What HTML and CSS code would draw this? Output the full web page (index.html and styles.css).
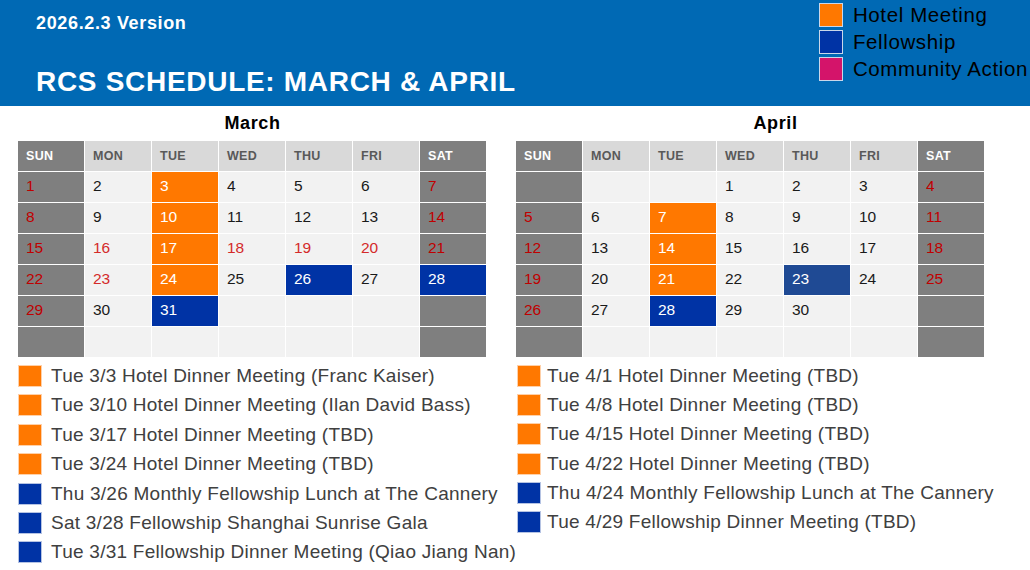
FILE: index.html
```html
<!DOCTYPE html>
<html lang="en">
<head>
<meta charset="utf-8">
<title>RCS Schedule: March &amp; April</title>
<link rel="stylesheet" href="styles.css">
</head>
<body>
<header class="header">
  <div class="header-left">
    <div class="version">2026.2.3 Version</div>
    <h1 class="title">RCS SCHEDULE: MARCH &amp; APRIL</h1>
  </div>
  <ul class="legend">
    <li class="legend-item"><span class="swatch swatch-hotel"></span>Hotel Meeting</li>
    <li class="legend-item"><span class="swatch swatch-fellow"></span>Fellowship</li>
    <li class="legend-item"><span class="swatch swatch-community"></span>Community Action</li>
  </ul>
</header>

<main class="main">
  <section class="month">
    <h2 class="month-title">March</h2>
    <div class="cal">
      <div class="hd wkend">SUN</div><div class="hd">MON</div><div class="hd">TUE</div><div class="hd">WED</div><div class="hd">THU</div><div class="hd">FRI</div><div class="hd wkend">SAT</div>

      <div class="c wkend">1</div><div class="c">2</div><div class="c hotel">3</div><div class="c">4</div><div class="c">5</div><div class="c">6</div><div class="c wkend">7</div>
      <div class="c wkend">8</div><div class="c">9</div><div class="c hotel">10</div><div class="c">11</div><div class="c">12</div><div class="c">13</div><div class="c wkend">14</div>
      <div class="c wkend">15</div><div class="c red">16</div><div class="c hotel">17</div><div class="c red">18</div><div class="c red">19</div><div class="c red">20</div><div class="c wkend">21</div>
      <div class="c wkend">22</div><div class="c red">23</div><div class="c hotel">24</div><div class="c">25</div><div class="c fellow">26</div><div class="c">27</div><div class="c fellow">28</div>
      <div class="c wkend">29</div><div class="c">30</div><div class="c fellow">31</div><div class="c"></div><div class="c"></div><div class="c"></div><div class="c wkend"></div>
      <div class="c wkend"></div><div class="c"></div><div class="c"></div><div class="c"></div><div class="c"></div><div class="c"></div><div class="c wkend"></div>
    </div>
    <ul class="events">
      <li class="event"><span class="sq sq-hotel"></span>Tue 3/3 Hotel Dinner Meeting (Franc Kaiser)</li>
      <li class="event"><span class="sq sq-hotel"></span>Tue 3/10 Hotel Dinner Meeting (Ilan David Bass)</li>
      <li class="event"><span class="sq sq-hotel"></span>Tue 3/17 Hotel Dinner Meeting (TBD)</li>
      <li class="event"><span class="sq sq-hotel"></span>Tue 3/24 Hotel Dinner Meeting (TBD)</li>
      <li class="event"><span class="sq sq-fellow"></span>Thu 3/26 Monthly Fellowship Lunch at The Cannery</li>
      <li class="event"><span class="sq sq-fellow"></span>Sat 3/28 Fellowship Shanghai Sunrise Gala</li>
      <li class="event"><span class="sq sq-fellow"></span>Tue 3/31 Fellowship Dinner Meeting (Qiao Jiang Nan)</li>
    </ul>
  </section>

  <section class="month month-april">
    <h2 class="month-title month-title-april">April</h2>
    <div class="cal">
      <div class="hd wkend">SUN</div><div class="hd">MON</div><div class="hd">TUE</div><div class="hd">WED</div><div class="hd">THU</div><div class="hd">FRI</div><div class="hd wkend">SAT</div>

      <div class="c wkend"></div><div class="c"></div><div class="c"></div><div class="c">1</div><div class="c">2</div><div class="c">3</div><div class="c wkend">4</div>
      <div class="c wkend">5</div><div class="c">6</div><div class="c hotel">7</div><div class="c">8</div><div class="c">9</div><div class="c">10</div><div class="c wkend">11</div>
      <div class="c wkend">12</div><div class="c">13</div><div class="c hotel">14</div><div class="c">15</div><div class="c">16</div><div class="c">17</div><div class="c wkend">18</div>
      <div class="c wkend">19</div><div class="c">20</div><div class="c hotel">21</div><div class="c">22</div><div class="c fellow-alt">23</div><div class="c">24</div><div class="c wkend">25</div>
      <div class="c wkend">26</div><div class="c">27</div><div class="c fellow">28</div><div class="c">29</div><div class="c">30</div><div class="c"></div><div class="c wkend"></div>
      <div class="c wkend"></div><div class="c"></div><div class="c"></div><div class="c"></div><div class="c"></div><div class="c"></div><div class="c wkend"></div>
    </div>
    <ul class="events events-april">
      <li class="event"><span class="sq sq-hotel"></span>Tue 4/1 Hotel Dinner Meeting (TBD)</li>
      <li class="event"><span class="sq sq-hotel"></span>Tue 4/8 Hotel Dinner Meeting (TBD)</li>
      <li class="event"><span class="sq sq-hotel"></span>Tue 4/15 Hotel Dinner Meeting (TBD)</li>
      <li class="event"><span class="sq sq-hotel"></span>Tue 4/22 Hotel Dinner Meeting (TBD)</li>
      <li class="event"><span class="sq sq-fellow"></span>Thu 4/24 Monthly Fellowship Lunch at The Cannery</li>
      <li class="event"><span class="sq sq-fellow"></span>Tue 4/29 Fellowship Dinner Meeting (TBD)</li>
    </ul>
  </section>
</main>
</body>
</html>
```

FILE: styles.css
```css
* { box-sizing: border-box; }

html, body {
  margin: 0;
  padding: 0;
  background: #ffffff;
}

body {
  width: 1030px;
  height: 570px;
  overflow: hidden;
  font-family: "Liberation Sans", Arial, sans-serif;
}

ul { list-style: none; margin: 0; padding: 0; }
h1, h2 { margin: 0; }

/* ---------- header ---------- */
.header {
  height: 106px;
  background: #0069b4;
  display: flex;
  justify-content: space-between;
  align-items: flex-start;
}

.header-left {
  padding: 12px 0 0 36px;
  color: #ffffff;
}

.version {
  font-size: 18px;
  font-weight: bold;
  line-height: 22px;
  letter-spacing: 0.65px;
}

.title {
  margin-top: 32px;
  font-size: 28px;
  font-weight: bold;
  line-height: 32px;
  letter-spacing: 0.7px;
}

.legend {
  padding: 3px 2px 0 0;
  display: flex;
  flex-direction: column;
  gap: 4px;
}

.legend-item {
  display: flex;
  align-items: center;
  gap: 10px;
  height: 23px;
  font-size: 20.5px;
  line-height: 23px;
  letter-spacing: 0.62px;
  color: #000000;
}

.swatch {
  width: 24px;
  height: 24px;
  border: 1px solid #c9d7ea;
  flex: none;
}

.swatch-hotel { background: #ff7800; }
.swatch-fellow { background: #0033a5; }
.swatch-community { background: #d4146a; }

/* ---------- months ---------- */
.main {
  display: flex;
  gap: 29px;
  padding-left: 18px;
}

.month {
  width: 469px;
}

.month-title {
  margin: 6px 0 7px;
  font-size: 18px;
  line-height: 22px;
  font-weight: bold;
  letter-spacing: 0.6px;
  text-align: center;
  color: #000000;
}

.month-title-april {
  padding-left: 50px;
}

.month-april .cal {
  margin-top: 1px;
}

.cal {
  display: grid;
  grid-template-columns: repeat(7, 66px);
  grid-template-rows: 30px repeat(6, 30px);
  gap: 1px;
  background: #ffffff;
}

.hd {
  background: #d9d9d9;
  color: #595959;
  font-size: 12.5px;
  font-weight: bold;
  letter-spacing: 0.3px;
  display: flex;
  align-items: center;
  padding-left: 8px;
}

.hd.wkend {
  background: #7f7f7f;
  color: #ffffff;
}

.c {
  background: #f2f2f2;
  color: #1a1a1a;
  font-size: 15.5px;
  line-height: 17px;
  padding: 5px 0 0 8px;
}

.c.wkend {
  background: #7f7f7f;
  color: #c00000;
}

.c.red { color: #d42a2a; }

.c.hotel {
  background: #ff7800;
  color: #ffffff;
}

.c.fellow {
  background: #0033a5;
  color: #ffffff;
}

.c.fellow-alt {
  background: #1f4a94;
  color: #ffffff;
}

/* ---------- event lists ---------- */
.events {
  margin-top: 8px;
  display: flex;
  flex-direction: column;
  gap: 7.4px;
}

.event {
  display: flex;
  align-items: center;
  gap: 9px;
  height: 22px;
  font-size: 19px;
  line-height: 22px;
  letter-spacing: 0.25px;
  color: #404040;
  white-space: nowrap;
}

.events-april {
  margin-left: 1px;
  gap: 7.2px;
}

.events-april .event {
  gap: 6px;
}

.sq {
  width: 24px;
  height: 22px;
  flex: none;
  border: 1px solid #ffd0a8;
}

.sq-hotel { background: #ff7800; }
.sq-fellow {
  background: #0033a5;
  border-color: #b5c3e3;
}
```
